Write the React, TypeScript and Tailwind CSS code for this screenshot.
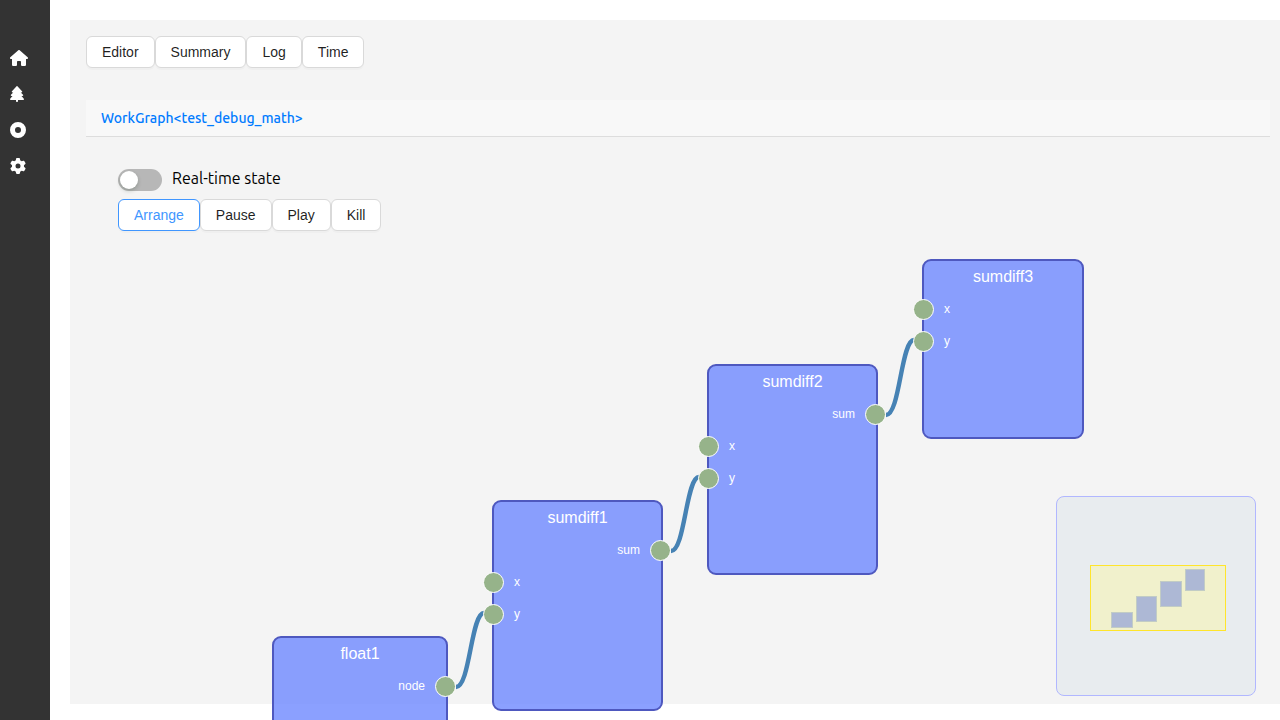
import { useState } from 'react';
import { FaCircleDot, FaGear, FaHouse, FaTree } from 'react-icons/fa6';

type GraphNode = {
  title: string;
  box: string;
  output?: string;
  inputs: string[];
};

const nodes: GraphNode[] = [
  { title: 'float1', box: 'left-[186px] top-[499px] w-[176px] h-[136px]', output: 'node', inputs: [] },
  { title: 'sumdiff1', box: 'left-[406px] top-[363px] w-[171px] h-[211px]', output: 'sum', inputs: ['x', 'y'] },
  { title: 'sumdiff2', box: 'left-[621px] top-[227px] w-[171px] h-[211px]', output: 'sum', inputs: ['x', 'y'] },
  { title: 'sumdiff3', box: 'left-[836px] top-[122px] w-[162px] h-[180px]', inputs: ['x', 'y'] },
];

const wires = [
  'M370 550 C384 550 385 476 398 476',
  'M585 414 C599 414 600 340 613 340',
  'M800 278 C814 278 815 203 828 203',
];

const links = [
  { label: 'Home', href: '#home', Icon: FaHouse, width: 'w-[18px]' },
  { label: 'WorkTree', href: '#worktree', Icon: FaTree, width: 'w-[14px]' },
  { label: 'Data', href: '#data', Icon: FaCircleDot, width: 'w-4' },
  { label: 'Settings', href: '#settings', Icon: FaGear, width: 'w-4' },
];

function Button({ text, active = false }: { text: string; active?: boolean }) {
  return (
    <button
      type="button"
      className={`h-8 rounded-md border bg-white px-[15px] text-sm shadow-[0_2px_0_rgba(0,0,0,0.02)] ${
        active ? 'border-[#4096ff] text-[#4096ff]' : 'border-[#d9d9d9] text-black/88'
      }`}
    >
      {text}
    </button>
  );
}

function Socket() {
  return <span className="size-[21px] shrink-0 rounded-full border border-white bg-[#96b38a]" />;
}

function NodeCard({ node }: { node: GraphNode }) {
  return (
    <section
      className={`absolute rounded-[9px] border-2 border-[#4e58bf] bg-[#6e88ff]/80 text-xs text-white ${node.box}`}
    >
      <h2 className="h-8 text-center text-base leading-[31px]">{node.title}</h2>
      {node.output && (
        <div className="-mr-[10px] flex h-8 items-center justify-end gap-[10px]">
          <span>{node.output}</span>
          <Socket />
        </div>
      )}
      {node.inputs.map((name) => (
        <div key={name} className="-ml-[11px] flex h-8 items-center gap-[10px]">
          <Socket />
          <span>{name}</span>
        </div>
      ))}
    </section>
  );
}

function Minimap() {
  return (
    <div className="absolute right-[14px] bottom-2 size-[200px] rounded-lg border border-[#b1b7ff] bg-[#e8ecef]">
      <div className="absolute top-[68px] left-[33px] h-[66px] w-[136px] border border-[#ffe52b] bg-[#f1f1cc]">
        <div className="absolute top-[46px] left-[20px] h-4 w-[22px] border border-[#c2ccc5] bg-[#adb8d5]" />
        <div className="absolute top-[30px] left-[45px] h-[26px] w-[21px] border border-[#c2ccc5] bg-[#adb8d5]" />
        <div className="absolute top-[15px] left-[69px] h-[26px] w-[22px] border border-[#c2ccc5] bg-[#adb8d5]" />
        <div className="absolute top-[3px] left-[94px] h-[22px] w-5 border border-[#c2ccc5] bg-[#adb8d5]" />
      </div>
    </div>
  );
}

export default function App() {
  const [live, setLive] = useState(false);

  return (
    <div className="flex h-screen overflow-hidden bg-white font-['Liberation_Sans',sans-serif]">
      <nav className="flex w-[50px] shrink-0 flex-col gap-5 bg-[#333] pt-[50px] pl-[10px] text-white">
        {links.map(({ label, href, Icon, width }) => (
          <a key={label} href={href} aria-label={label} className="block">
            <Icon className={`h-4 ${width}`} />
          </a>
        ))}
      </nav>
      <main className="flex min-w-0 flex-1 pt-5 pb-4 pl-5">
        <div className="flex min-w-0 flex-1 flex-col bg-[#f4f4f4] pt-4 pr-[10px] pl-4">
          <div className="flex">
            <Button text="Editor" />
            <Button text="Summary" />
            <Button text="Log" />
            <Button text="Time" />
          </div>
          <header className="mt-8 border-b border-[#ddd] bg-[#f8f8f8] px-[15px] font-['Ubuntu','Noto_Sans',sans-serif] text-sm leading-9 font-medium text-[#007bff]">
            <a href="#workgraph">WorkGraph&lt;test_debug_math&gt;</a>
          </header>
          <div className="relative min-h-0 flex-1">
            <svg className="absolute top-0 left-0 size-full overflow-visible" fill="none" stroke="#4682b4" strokeWidth="4.4">
              {wires.map((d) => (
                <path key={d} d={d} />
              ))}
            </svg>
            {nodes.map((node) => (
              <NodeCard key={node.title} node={node} />
            ))}
            <div className="relative flex flex-col items-start gap-2 p-8">
              <label className="flex h-[22px] items-start gap-[10px] font-['Ubuntu','Noto_Sans',sans-serif] text-base leading-[18px] text-black">
                <input
                  type="checkbox"
                  role="switch"
                  checked={live}
                  onChange={(e) => setLive(e.target.checked)}
                  className="h-[22px] w-11 appearance-none rounded-full bg-black/25 p-[2px] before:block before:size-[18px] before:rounded-full before:bg-white before:shadow-[0_2px_4px_rgba(0,35,11,0.2)] checked:bg-[#1677ff] checked:before:ml-auto"
                />
                Real-time state
              </label>
              <div className="flex">
                <Button text="Arrange" active />
                <Button text="Pause" />
                <Button text="Play" />
                <Button text="Kill" />
              </div>
            </div>
            <Minimap />
          </div>
        </div>
      </main>
    </div>
  );
}
